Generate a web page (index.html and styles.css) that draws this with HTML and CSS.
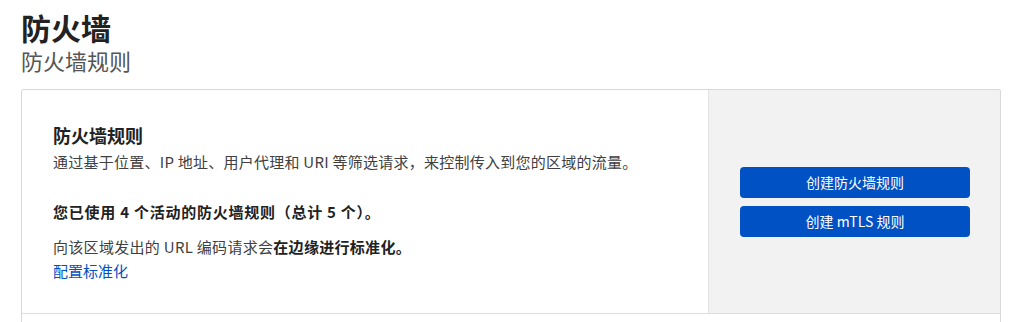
FILE: index.html
```html
<!DOCTYPE html>
<html lang="zh-CN">
<head>
<meta charset="utf-8">
<title>防火墙</title>
<link rel="stylesheet" href="styles.css">
</head>
<body>
<div class="page">
  <h1 class="title">防火墙</h1>
  <div class="subtitle">防火墙规则</div>
  <div class="card">
    <div class="section">
      <div class="main">
        <h2 class="card-title">防火墙规则</h2>
        <p class="desc">通过基于位置、IP 地址、用户代理和 URI 等筛选请求，来控制传入到您的区域的流量。</p>
        <p class="usage">您已使用 4 个活动的防火墙规则（总计 5 个）。</p>
        <p class="note">向该区域发出的 URL 编码请求会<strong>在边缘进行标准化。</strong></p>
        <a class="link" href="#">配置标准化</a>
      </div>
      <div class="side">
        <button class="btn">创建防火墙规则</button>
        <button class="btn">创建 mTLS 规则</button>
      </div>
    </div>
    <div class="section next"></div>
  </div>
</div>
</body>
</html>
```

FILE: styles.css
```css
html, body {
  margin: 0;
  padding: 0;
  background: #ffffff;
}
body {
  font-family: "Noto Sans CJK SC", "Noto Sans", sans-serif;
  color: #313131;
  overflow: hidden;
}
.page {
  padding: 9px 23px 0 21px;
}
.title {
  margin: 0;
  font-size: 30px;
  line-height: 36px;
  font-weight: 700;
  color: #222222;
}
.subtitle {
  font-size: 22px;
  line-height: 30px;
  color: #555555;
  font-weight: 400;
}
.card {
  margin-top: 14px;
  border: 1px solid #d9d9d9;
  border-radius: 2px;
}
.section {
  display: flex;
}
.main {
  flex: 1;
  padding: 32px 32px 30px 31px;
}
.card-title {
  margin: 0;
  font-size: 18px;
  line-height: 26px;
  font-weight: 700;
  color: #222222;
}
.desc {
  margin: 3px 0 0;
  font-size: 15px;
  line-height: 22px;
  color: #404040;
  letter-spacing: 0.25px;
}
.usage {
  margin: 28px 0 0;
  font-size: 15px;
  line-height: 22px;
  font-weight: 700;
  color: #222222;
  letter-spacing: 0.75px;
}
.note {
  margin: 12px 0 0;
  font-size: 15px;
  line-height: 24px;
  color: #404040;
  letter-spacing: 0.3px;
}
.note strong {
  color: #222222;
  font-weight: 700;
}
.link {
  display: block;
  font-size: 15px;
  line-height: 24px;
  color: #0051c3;
  text-decoration: none;
}
.side {
  width: 292px;
  box-sizing: border-box;
  background: #f2f2f2;
  border-left: 1px solid #e3e3e3;
  padding: 0 30px 0 31px;
  display: flex;
  flex-direction: column;
  justify-content: center;
  gap: 8px;
}
.btn {
  height: 31px;
  border: none;
  border-radius: 4px;
  background: #0051c3;
  color: #ffffff;
  font-family: "Noto Sans CJK SC", "Noto Sans", sans-serif;
  font-size: 14px;
  cursor: pointer;
}
.next {
  height: 60px;
  border-top: 1px solid #dedede;
}
```
